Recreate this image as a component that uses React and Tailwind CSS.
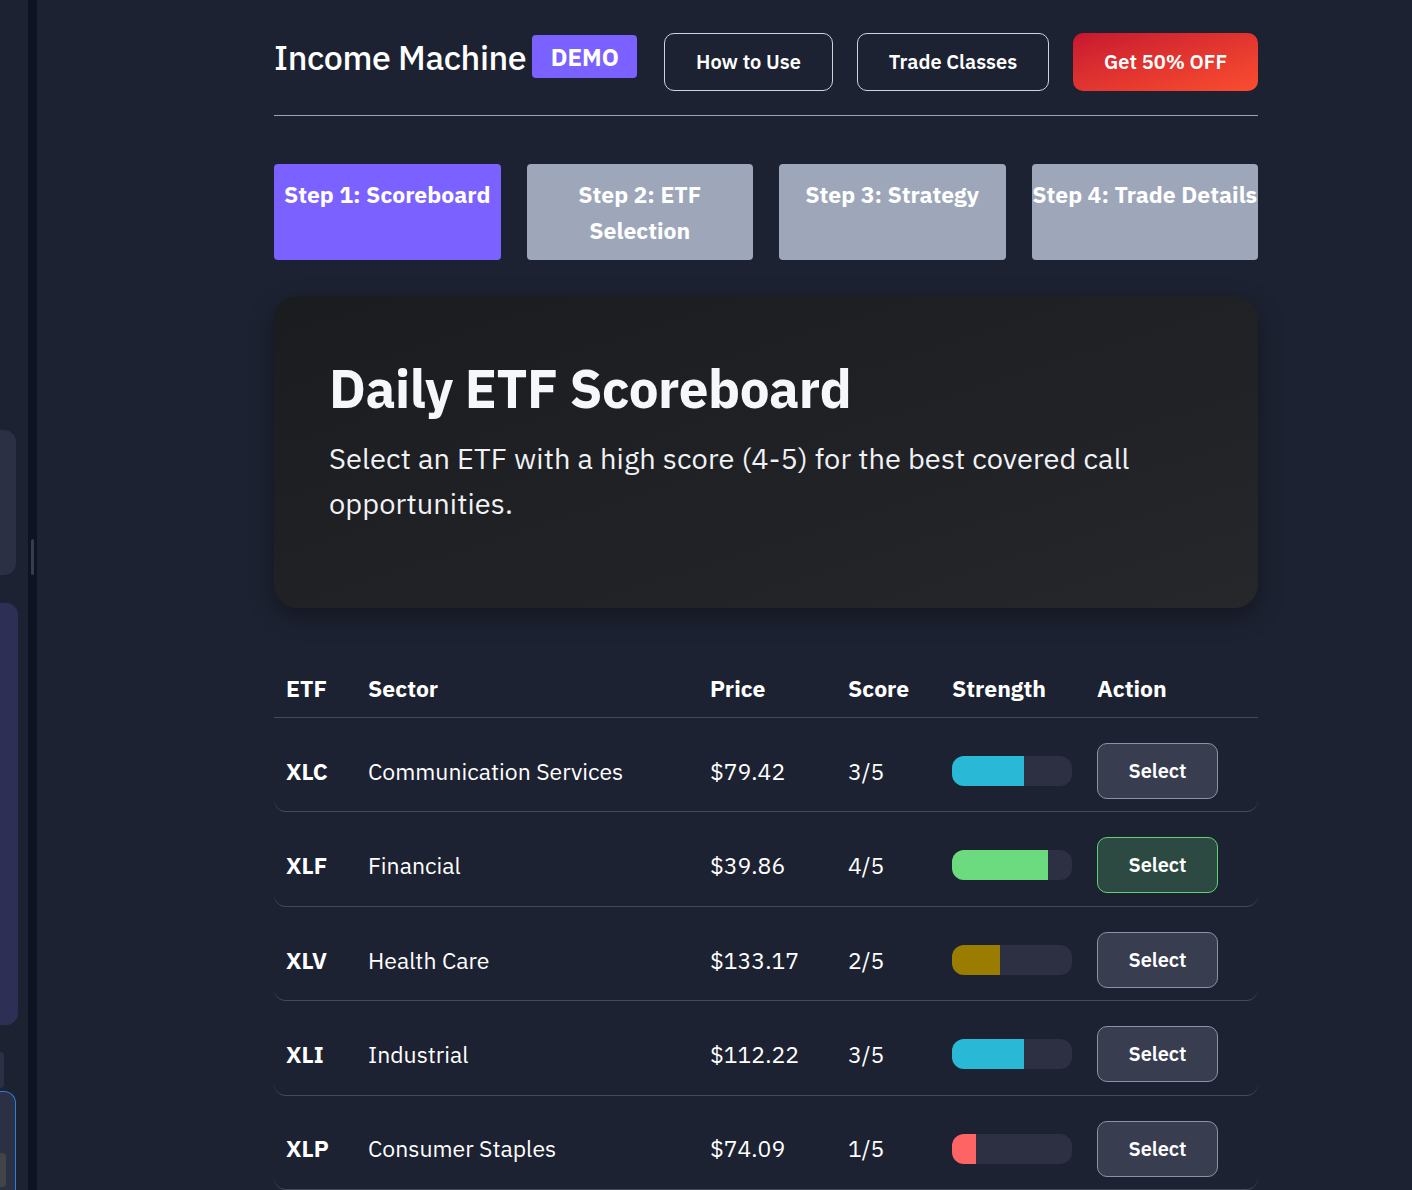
// App.jsx - Income Machine ETF scoreboard (step 1)
import React from 'react';

const font = { fontFamily: '"IBM Plex Sans", Roboto, "Liberation Sans", sans-serif' };

const steps = [
  { label: 'Step 1: Scoreboard', active: true },
  { label: <>Step 2: ETF<br />Selection</> },
  { label: 'Step 3: Strategy' },
  { label: 'Step 4: Trade Details' },
];

const etfs = [
  { ticker: 'XLC', sector: 'Communication Services', price: '$79.42', score: 3, bar: 'bg-[#29b8d6]', fill: 'w-[72px]' },
  { ticker: 'XLF', sector: 'Financial', price: '$39.86', score: 4, bar: 'bg-[#6cdb7f]', fill: 'w-[96px]', picked: true },
  { ticker: 'XLV', sector: 'Health Care', price: '$133.17', score: 2, bar: 'bg-[#9a7d00]', fill: 'w-[48px]' },
  { ticker: 'XLI', sector: 'Industrial', price: '$112.22', score: 3, bar: 'bg-[#29b8d6]', fill: 'w-[72px]' },
  { ticker: 'XLP', sector: 'Consumer Staples', price: '$74.09', score: 1, bar: 'bg-[#ff6464]', fill: 'w-[24px]' },
];

const cols = 'grid grid-cols-[82px_342px_138px_104px_145px_173px] items-center';

const Sidebar = () => (
  <div className="flex shrink-0 h-[1190px] overflow-hidden">
    {/* clipped panel content */}
    <div className="w-[28px] flex flex-col">
      <div className="shrink-0 mt-[430px] h-[145px] w-[16px] rounded-r-xl bg-[#2b3044]" />
      <div className="shrink-0 mt-[28px] h-[422px] w-[18px] rounded-r-xl bg-[#2e2f55]" />
      <div className="shrink-0 mt-[27px] h-[36px] w-[4px] rounded-r-md bg-[#2b3044]" />
      <div className="shrink-0 mt-[3px] h-[110px] w-[16px] rounded-tr-xl border border-l-0 border-[#2a7fd9] bg-[#2b3044] pt-[61px]">
        <div className="h-[34px] w-[6px] rounded-r bg-[#434448]" />
      </div>
    </div>
    <div className="w-[9px] bg-[#0e1322] pl-[3px] pt-[539px]">
      <div className="h-[36px] w-[3px] rounded bg-[#353b52]" />
    </div>
  </div>
);

export default function App() {
  return (
    <div className="flex min-h-[1190px] bg-[#1d2232] text-white overflow-hidden" style={font}>
      <Sidebar />

      <main className="pl-[237px] w-[1221px] shrink-0">
        {/* Header */}
        <header className="flex items-start justify-between pt-[33px] pb-[24px] border-b border-[#a0a4b0]">
          <div className="flex items-center gap-[6px] mt-[2px]">
            <h1 className="text-[34px] leading-none font-medium tracking-[-0.4px]">Income Machine</h1>
            <span className="h-[43px] w-[105px] flex items-center justify-center rounded bg-[#7b61ff] text-[24px] font-bold">DEMO</span>
          </div>
          <nav className="flex items-center gap-[24px]">
            <button className="h-[58px] w-[169px] rounded-[10px] border border-[#d0d3da] text-[20px] font-semibold">How to Use</button>
            <button className="h-[58px] w-[192px] rounded-[10px] border border-[#d0d3da] text-[20px] font-semibold">Trade Classes</button>
            <button className="h-[58px] w-[185px] rounded-[10px] bg-gradient-to-br from-[#c8162f] to-[#fb4d2f] text-[20px] font-semibold">Get 50% OFF</button>
          </nav>
        </header>

        {/* Steps */}
        <div className="grid grid-cols-4 gap-[26px] mt-[48px]">
          {steps.map((s, i) => (
            <div
              key={i}
              className={`h-[96px] rounded pt-[12px] text-center text-[23px] leading-[36px] font-bold whitespace-nowrap ${s.active ? 'bg-[#7b61ff]' : 'bg-[#9ea6ba]'}`}
            >
              {s.label}
            </div>
          ))}
        </div>

        {/* Intro card */}
        <section className="mt-[36px] h-[312px] rounded-[24px] bg-gradient-to-br from-[#1b1c20] via-[#202125] to-[#26272b] px-[55px] pt-[58px] shadow-[0_8px_24px_rgba(0,0,0,0.35)]">
          <h2 className="text-[53px] leading-[70px] font-bold text-[#f6f7fb] tracking-[-0.5px]">Daily ETF Scoreboard</h2>
          <p className="mt-[12px] text-[29px] leading-[45px] text-[#f1f2f5] tracking-[0.1px]">
            Select an ETF with a high score (4-5) for the best covered call opportunities.
          </p>
        </section>

        {/* Table */}
        <div className="mt-[44px]">
          <div className={`${cols} h-[66px] pt-[8px] border-b border-[#454a5b] text-[23px] font-bold`}>
            <div className="px-3">ETF</div>
            <div className="px-3">Sector</div>
            <div className="px-3">Price</div>
            <div className="px-3">Score</div>
            <div className="px-3">Strength</div>
            <div className="px-3">Action</div>
          </div>

          {etfs.map((e) => (
            <div key={e.ticker} className={`${cols} pt-[25px] pb-[12.4px] rounded-xl border-b border-[#454a5b] text-[23px]`}>
              <div className="px-3 font-bold">{e.ticker}</div>
              <div className="px-3">{e.sector}</div>
              <div className="px-3">{e.price}</div>
              <div className="px-3">{e.score}/5</div>
              <div className="px-3">
                <div className="h-[30px] w-[120px] rounded-xl bg-[#2c3042] overflow-hidden">
                  <div className={`h-full ${e.fill} ${e.bar}`} />
                </div>
              </div>
              <div className="px-3">
                <button
                  className={`h-[56px] w-[121px] rounded-[10px] border text-[20px] font-semibold ${e.picked ? 'bg-[#2c4a42] border-[#5fd36f]' : 'bg-[#383d50] border-[#8d92a3]'}`}
                >
                  Select
                </button>
              </div>
            </div>
          ))}
        </div>
      </main>
    </div>
  );
}
